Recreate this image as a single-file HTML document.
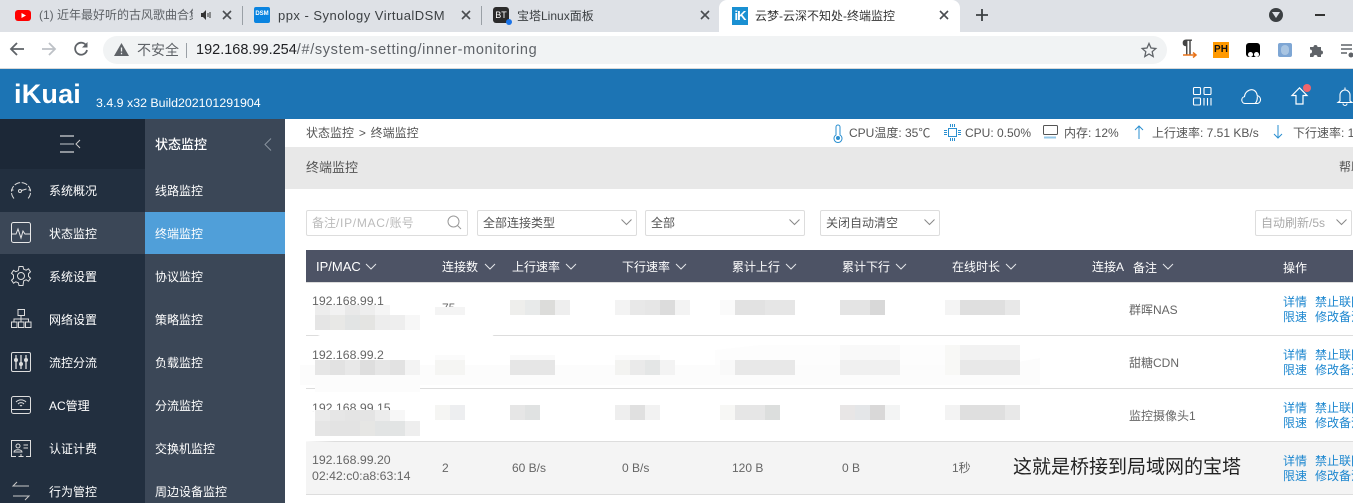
<!DOCTYPE html>
<html lang="zh">
<head>
<meta charset="utf-8">
<title>云梦-云深不知处-终端监控</title>
<style>
html,body{margin:0;padding:0;width:1353px;height:503px;overflow:hidden;background:#fff}
body{position:relative;font-family:"Liberation Sans","Noto Sans CJK SC",sans-serif;font-size:12px;color:#666}
.b{position:absolute}
.t{position:absolute;white-space:nowrap;line-height:16px;height:16px}
.n{color:#fff;font-size:12px}
.h{color:#fff;font-size:12px}
.l{color:#1b86cf;font-size:12px}
.d{color:#666;font-size:12px}
.s{color:#555;font-size:12px}
.tab{color:#3c4043;font-size:12px}
svg{position:absolute;overflow:visible}
.sel{position:absolute;top:210px;height:24px;border:1px solid #ddd;border-radius:2px;background:#fff;box-sizing:content-box}
</style>
</head>
<body>
<!-- Tab strip -->
<div class="b" style="left:0;top:0;width:1353px;height:32px;background:#dee1e6"></div>
<div class="b" style="left:719px;top:0;width:241px;height:32px;background:#fff;border-radius:8px 8px 0 0"></div>
<div class="b" style="left:242px;top:6px;width:1px;height:19px;background:#9aa0a6"></div>
<div class="b" style="left:481px;top:6px;width:1px;height:19px;background:#9aa0a6"></div>

<div class="b" style="left:15px;top:10px;width:16px;height:11px;background:#f00;border-radius:3px"></div>
<svg style="left:15px;top:10px" width="16" height="11"><path d="M6.500 3v5l4.500-2.500z" fill="#fff"/></svg>
<div class="t tab" style="left:39px;top:7px;width:154px;overflow:hidden;color:#5f6368">(1) 近年最好听的古风歌曲合集</div>
<svg style="left:200px;top:9px" width="12" height="12"><path d="M1 4h2l3-3v10l-3-3H1z" fill="#333"/><path d="M8 4v4M10 3v6" stroke="#333"/></svg>
<svg style="left:222px;top:10px" width="10" height="10"><path d="M1 1l8 8M9 1l-8 8" stroke="#4a4d51" stroke-width="1.600"/></svg>

<div class="b" style="left:254px;top:7px;width:16px;height:16px;background:#0a84e0;border-radius:2px"></div>
<div class="t" style="left:254px;top:10px;width:16px;font-size:6px;line-height:9px;height:9px;color:#fff;text-align:center;font-weight:bold">DSM</div>
<div class="t tab" style="left:278px;top:8px;font-size:13px;letter-spacing:.48px">ppx - Synology VirtualDSM</div>
<svg style="left:461px;top:10px" width="10" height="10"><path d="M1 1l8 8M9 1l-8 8" stroke="#4a4d51" stroke-width="1.600"/></svg>

<div class="b" style="left:493px;top:7px;width:16px;height:16px;background:#2b2b2b;border-radius:3px"></div>
<div class="t" style="left:493px;top:10px;width:16px;font-size:9px;line-height:10px;height:10px;color:#fff;text-align:center">BT</div>
<div class="b" style="left:506px;top:19px;width:6px;height:6px;border-radius:3px;background:#1a73e8"></div>
<div class="t tab" style="left:517px;top:8px">宝塔Linux面板</div>
<svg style="left:700px;top:10px" width="10" height="10"><path d="M1 1l8 8M9 1l-8 8" stroke="#4a4d51" stroke-width="1.600"/></svg>

<div class="b" style="left:732px;top:7px;width:16px;height:18px;background:#1a90d2"></div>
<div class="t" style="left:732px;top:8px;width:16px;font-size:13px;color:#fff;text-align:center;font-weight:bold;letter-spacing:-1px">iK</div>
<div class="t tab" style="left:755px;top:8px;font-size:12px;color:#333">云梦-云深不知处-终端监控</div>
<svg style="left:939px;top:10px" width="10" height="10"><path d="M1 1l8 8M9 1l-8 8" stroke="#4a4d51" stroke-width="1.600"/></svg>
<svg style="left:976px;top:9px" width="12" height="12"><path d="M6 0v12M0 6h12" stroke="#3c4043" stroke-width="1.800"/></svg>

<div class="b" style="left:1269px;top:8px;width:14px;height:14px;border-radius:7px;background:#3c4043"></div>
<svg style="left:1272px;top:12px" width="8" height="6"><path d="M0 0h8L4 6z" fill="#dee1e6"/></svg>
<div class="b" style="left:1315px;top:14px;width:10px;height:2px;background:#333"></div>

<!-- Toolbar -->
<div class="b" style="left:0;top:32px;width:1353px;height:36px;background:#fff"></div>
<div class="b" style="left:0;top:68px;width:1353px;height:1px;background:#d8d8d8"></div>
<svg style="left:9px;top:41px" width="16" height="16"><path d="M15 8H2M8 2L2 8l6 6" fill="none" stroke="#5f6368" stroke-width="1.800"/></svg>
<svg style="left:41px;top:41px" width="16" height="16"><path d="M1 8h13M8 2l6 6-6 6" fill="none" stroke="#bdc1c6" stroke-width="1.800"/></svg>
<svg style="left:73px;top:41px" width="16" height="16"><path d="M13.500 5A6 6 0 1 0 14 9" fill="none" stroke="#5f6368" stroke-width="1.800"/><path d="M14.500 1v5.500H9z" fill="#5f6368"/></svg>
<div class="b" style="left:103px;top:36px;width:1064px;height:28px;border-radius:14px;background:#f1f3f4"></div>
<svg style="left:114px;top:43px" width="15" height="13"><path d="M7.500 0L15 13H0z" fill="#5f6368"/><path d="M7.500 4.500v4M7.500 9.800v1.500" stroke="#f1f3f4" stroke-width="1.300"/></svg>
<div class="t" style="left:137px;top:42px;font-size:14px;color:#5f6368">不安全</div>
<div class="b" style="left:186px;top:43px;width:1px;height:15px;background:#9aa0a6"></div>
<div class="t" style="left:196px;top:42px;font-size:14.500px;color:#5f6368"><span style="color:#202124">192.168.99.254</span><span style="letter-spacing:.65px">/#/system-setting/inner-monitoring</span></div>
<svg style="left:1141px;top:42px" width="16" height="16"><path d="M8 1.500l2 4.500 4.800.5-3.600 3.200 1 4.800L8 12l-4.200 2.500 1-4.800L1.200 6.500 6 6z" fill="none" stroke="#5f6368" stroke-width="1.300"/></svg>

<div class="t" style="left:1182px;top:39px;font-size:19px;font-weight:bold;color:#444;line-height:18px;height:18px">¶</div>
<svg style="left:1183px;top:52px" width="14" height="6" fill="none" stroke="#e8731a" stroke-width="1.500"><path d="M0 3h13M10 .5L13 3l-3 2.500"/></svg>
<div class="b" style="left:1213px;top:42px;width:16px;height:16px;background:#f90"></div>
<div class="t" style="left:1213px;top:44px;width:16px;font-size:10px;line-height:12px;height:12px;font-weight:bold;color:#111;text-align:center">PH</div>
<div class="b" style="left:1246px;top:43px;width:14px;height:14px;background:#000;border-radius:3px"></div>
<div class="b" style="left:1248px;top:52px;width:5px;height:5px;background:#fff;border-radius:3px"></div>
<div class="b" style="left:1254px;top:52px;width:5px;height:5px;background:#fff;border-radius:3px"></div>
<div class="b" style="left:1278px;top:43px;width:14px;height:14px;background:#7ea6d4;border-radius:2px"></div>
<div class="b" style="left:1281px;top:45px;width:8px;height:10px;background:#a9c5e2;border-radius:4px"></div>
<svg style="left:1309px;top:43px" width="15" height="15"><path d="M1 4h3.500a2 2 0 0 1 4 0H12v3.500a2 2 0 0 1 0 4V14H8.500a2 2 0 0 0-4 0H1v-3.500a2 2 0 0 0 0-4z" fill="#5f6368"/></svg>
<svg style="left:1341px;top:44px" width="12" height="14"><path d="M0 1h11M0 5h11M0 9h6" stroke="#5f6368" stroke-width="1.500"/><circle cx="10" cy="11" r="2.500" fill="#5f6368"/></svg>

<!-- Blue header -->
<div class="b" style="left:0;top:69px;width:1353px;height:50px;background:#1c74b4"></div>
<div class="t" style="left:14px;top:78px;height:32px;line-height:32px;font-size:27px;font-weight:bold;color:#fff;letter-spacing:.2px">iKuai</div>
<div class="t" style="left:96px;top:95px;font-size:12.400px;color:#fff">3.4.9 x32 Build202101291904</div>
<svg style="left:1193px;top:87px" width="19" height="19" fill="none" stroke="#fff" stroke-width="1.100"><rect x=".5" y=".5" width="7" height="7" rx="1"/><rect x="11" y=".5" width="7" height="7" rx="1"/><rect x=".5" y="11" width="7" height="7" rx="1"/><path d="M11 11v7.500M14.500 11v7.500M18 11v7.500"/></svg>
<svg style="left:1241px;top:89px" width="21" height="15" fill="none" stroke="#fff" stroke-width="1.100"><path d="M4 14.500a3.500 3.500 0 0 1-.5-6.900C4 3 8 .5 11 .7c3 .2 5 3 5.300 6a4 4 0 0 1 .2 7.800zM14 14.500c2-1.500 2.500-5 2.300-7"/></svg>
<svg style="left:1291px;top:87px" width="17" height="18" fill="none" stroke="#fff" stroke-width="1.200"><path d="M8.500 .8L16 8.500h-4V17H5V8.500H1z"/></svg>
<div class="b" style="left:1303px;top:84px;width:8px;height:8px;border-radius:4px;background:#f0656c"></div>
<svg style="left:1337px;top:87px" width="16" height="19" fill="none" stroke="#fff" stroke-width="1.100"><path d="M8 .5v2M3 14V8a5 5 0 0 1 10 0v6l2 1.500H1zM6 16.500a2 2 0 0 0 4 0"/></svg>

<!-- Sidebars -->
<div class="b" style="left:0;top:119px;width:145px;height:384px;background:#222f3f"></div>
<div class="b" style="left:0;top:119px;width:145px;height:50px;background:#1c2837"></div>
<div class="b" style="left:145px;top:119px;width:140px;height:384px;background:#3b4757"></div>
<div class="b" style="left:0;top:212px;width:145px;height:42px;background:#3b4757"></div>
<div class="b" style="left:145px;top:212px;width:140px;height:42px;background:#509fd9"></div>

<svg style="left:60px;top:135px" width="21" height="18" fill="none"><path d="M0 1h14M0 17h14" stroke="#fff" stroke-width="1"/><path d="M0 9h14" stroke="#8b929b" stroke-width="1.500"/><path d="M20 5l-4 4 4 4" stroke="#ccc" stroke-width="1"/></svg>
<div class="t n" style="left:155px;top:137px;font-size:13px;font-weight:500">状态监控</div>
<svg style="left:264px;top:138px" width="8" height="13"><path d="M7 .5L1 6.500l6 6" fill="none" stroke="#8a94a0" stroke-width="1"/></svg>

<svg style="left:10px;top:180px" width="22" height="20" fill="none" stroke="#ddd" stroke-width="1"><path d="M4 18.500A9.500 9.500 0 1 1 18 18.500" stroke-dasharray="6 1.500"/><circle cx="10" cy="11" r="1.500"/><path d="M11.500 10.500l5-1.500M1 10h2.500M18.500 10H21"/></svg>
<svg style="left:11px;top:222px" width="20" height="21" fill="none" stroke="#e8e8e8" stroke-width="1"><rect x=".5" y=".5" width="19" height="20" rx="2"/><path d="M1 12h4l2-5 3 9 2-7 2 3h5"/></svg>
<svg style="left:11px;top:266px" width="20" height="20" fill="none" stroke="#ddd" stroke-width="1"><path d="M8 .5h4l.7 2.700 2.500 1 2.300-1.400 2 3-2 1.800v2.800l2 1.800-2 3-2.300-1.400-2.500 1L12 19.500H8l-.7-2.700-2.500-1-2.300 1.400-2-3 2-1.800V9.100l-2-1.800 2-3 2.300 1.400 2.500-1z"/><circle cx="10" cy="10" r="3.500"/></svg>
<svg style="left:11px;top:309px" width="20" height="19" fill="none" stroke="#ddd" stroke-width="1"><rect x="7" y=".5" width="6.500" height="6"/><rect x=".5" y="13" width="5.500" height="5.500"/><rect x="7.500" y="13" width="5.500" height="5.500"/><rect x="14.500" y="13" width="5.500" height="5.500"/><path d="M10 6.500v3.500M3 13v-3h14.500v3M10 10v3"/></svg>
<svg style="left:11px;top:352px" width="20" height="20" fill="none" stroke="#ddd" stroke-width="1"><rect x=".5" y=".5" width="19" height="19" rx="1.500"/><path d="M5 3v14M10 3v14M15 3v14" stroke-width="1.300"/><circle cx="5" cy="8" r="1.500" fill="#ddd"/><circle cx="10" cy="12" r="1.500" fill="#ddd"/><circle cx="15" cy="8" r="1.500" fill="#ddd"/></svg>
<svg style="left:11px;top:396px" width="20" height="18" fill="none" stroke="#ddd" stroke-width="1"><rect x=".5" y=".5" width="19" height="17" rx="2"/><path d="M.5 13.500h19M5 6a7 7 0 0 1 10 0M7 8a4 4 0 0 1 6 0M9 10a1.500 1.500 0 0 1 2 0"/></svg>
<svg style="left:11px;top:440px" width="20" height="17" fill="none" stroke="#ddd" stroke-width="1"><path d="M5 16.500H.5V.5h19v16H15M7.500 16.500h5M10 14v2"/><circle cx="7" cy="6" r="2"/><path d="M3 12c0-3 8-3 8 0zM12.500 5H17M12.500 8H17"/></svg>
<svg style="left:12px;top:481px" width="18" height="20" fill="none" stroke="#c8c8c8" stroke-width="1"><path d="M17 5H1l4-4M1 15h16l-4 4"/></svg>

<div class="t n" style="left:49px;top:183px">系统概况</div>
<div class="t n" style="left:49px;top:226px">状态监控</div>
<div class="t n" style="left:49px;top:269px">系统设置</div>
<div class="t n" style="left:49px;top:312px">网络设置</div>
<div class="t n" style="left:49px;top:355px">流控分流</div>
<div class="t n" style="left:49px;top:398px">AC管理</div>
<div class="t n" style="left:49px;top:441px">认证计费</div>
<div class="t n" style="left:49px;top:484px">行为管控</div>

<div class="t n" style="left:155px;top:183px">线路监控</div>
<div class="t n" style="left:155px;top:226px">终端监控</div>
<div class="t n" style="left:155px;top:269px">协议监控</div>
<div class="t n" style="left:155px;top:312px">策略监控</div>
<div class="t n" style="left:155px;top:355px">负载监控</div>
<div class="t n" style="left:155px;top:398px">分流监控</div>
<div class="t n" style="left:155px;top:441px">交换机监控</div>
<div class="t n" style="left:155px;top:484px">周边设备监控</div>

<!-- Status bar -->
<div class="t s" style="left:306px;top:125px;word-spacing:1.500px">状态监控 &gt; 终端监控</div>
<svg style="left:832px;top:124px" width="12" height="18" fill="none" stroke="#2a8fd0" stroke-width="1"><path d="M4 11V3a2 2 0 0 1 4 0v8a4 4 0 1 1-4 0z"/><circle cx="6" cy="14" r="1.500" fill="#2a8fd0"/></svg>
<div class="t s" style="left:849px;top:125px">CPU温度: 35℃</div>
<svg style="left:944px;top:124px" width="17" height="17" fill="none" stroke="#2a8fd0" stroke-width="1"><rect x="4.500" y="4.500" width="8" height="8"/><path d="M0 6.500h3M0 8.500h3M0 10.500h3M14 6.500h3M14 8.500h3M14 10.500h3M6.500 0v3M8.500 0v3M10.500 0v3M6.500 14v3M8.500 14v3M10.500 14v3"/></svg>
<div class="t s" style="left:965px;top:125px">CPU: 0.50%</div>
<svg style="left:1043px;top:125px" width="16" height="15" fill="none" stroke="#555" stroke-width="1"><rect x=".5" y=".5" width="14" height="9" rx="1"/><path d="M2 11.500v2M4 11.500v2M6 11.500v2M8 11.500v2M10 11.500v2M12 11.500v2" stroke="#2a8fd0"/></svg>
<div class="t s" style="left:1064px;top:125px">内存: 12%</div>
<svg style="left:1134px;top:125px" width="10" height="14" fill="none" stroke="#2a8fd0" stroke-width="1"><path d="M5 14V1M1 5l4-4 4 4"/></svg>
<div class="t s" style="left:1152px;top:125px">上行速率: 7.51 KB/s</div>
<svg style="left:1273px;top:125px" width="10" height="14" fill="none" stroke="#2a8fd0" stroke-width="1"><path d="M5 0v13M1 9l4 4 4-4"/></svg>
<div class="t s" style="left:1293px;top:125px">下行速率: 1</div>

<!-- Grey title -->
<div class="b" style="left:285px;top:147px;width:1068px;height:42px;background:#e8e8e8"></div>
<div class="t" style="left:306px;top:160px;font-size:13px;color:#555">终端监控</div>
<div class="t" style="left:1339px;top:159px;font-size:12px;color:#555">帮助</div>

<!-- Filters -->
<div class="sel" style="left:306px;width:160px"></div>
<div class="t" style="left:312px;top:215px;color:#bbb">备注<span style="letter-spacing:.7px">/IP/MAC/</span>账号</div>
<svg style="left:447px;top:215px" width="15" height="15" fill="none" stroke="#999" stroke-width="1"><circle cx="6.500" cy="6.500" r="5.500"/><path d="M10.500 10.500l3.500 3.500"/></svg>
<div class="sel" style="left:477px;width:158px"></div>
<div class="t" style="left:483px;top:215px;color:#555">全部连接类型</div>
<svg style="left:621px;top:219px" width="11" height="6" fill="none" stroke="#888"><path d="M.5 .5l5 5 5-5"/></svg>
<div class="sel" style="left:645px;width:158px"></div>
<div class="t" style="left:651px;top:215px;color:#555">全部</div>
<svg style="left:789px;top:219px" width="11" height="6" fill="none" stroke="#888"><path d="M.5 .5l5 5 5-5"/></svg>
<div class="sel" style="left:820px;width:118px"></div>
<div class="t" style="left:826px;top:215px;color:#555">关闭自动清空</div>
<svg style="left:924px;top:219px" width="11" height="6" fill="none" stroke="#888"><path d="M.5 .5l5 5 5-5"/></svg>
<div class="sel" style="left:1255px;width:95px"></div>
<div class="t" style="left:1261px;top:215px;color:#aaa">自动刷新/5s</div>
<svg style="left:1336px;top:219px" width="11" height="6" fill="none" stroke="#888"><path d="M.5 .5l5 5 5-5"/></svg>

<!-- Table header -->
<div class="b" style="left:306px;top:250px;width:1047px;height:32px;background:#4d5365"></div>
<div class="b" style="left:306px;top:282px;width:1047px;height:1px;background:#dcdcdc"></div>
<div class="t h" style="left:316px;top:259px;font-size:13px">IP/MAC</div>
<div class="t h" style="left:442px;top:259px">连接数</div>
<div class="t h" style="left:512px;top:259px">上行速率</div>
<div class="t h" style="left:622px;top:259px">下行速率</div>
<div class="t h" style="left:732px;top:259px">累计上行</div>
<div class="t h" style="left:842px;top:259px">累计下行</div>
<div class="t h" style="left:952px;top:259px">在线时长</div>
<div class="t h" style="left:1092px;top:259px">连接A</div>
<div class="t h" style="left:1133px;top:260px">备注</div>
<div class="t h" style="left:1283px;top:260px">操作</div>
<svg style="left:0;top:0" width="1353" height="503" fill="none" stroke="#e4e6ea" stroke-width="1"><path d="M366 264l5 5 5-5M485 264l5 5 5-5M566 264l5 5 5-5M676 264l5 5 5-5M786 264l5 5 5-5M896 264l5 5 5-5M1006 264l5 5 5-5M1163 264l5 5 5-5"/></svg>

<!-- Rows -->
<div class="b" style="left:306px;top:442px;width:1047px;height:52px;background:#f4f4f4"></div>
<div class="b" style="left:306px;top:335px;width:1047px;height:1px;background:#ddd"></div>
<div class="b" style="left:306px;top:388px;width:1047px;height:1px;background:#ddd"></div>
<div class="b" style="left:306px;top:441px;width:1047px;height:1px;background:#ddd"></div>
<div class="b" style="left:306px;top:494px;width:1047px;height:1px;background:#ddd"></div>

<div class="t d" style="left:312px;top:293px;font-size:12.300px">192.168.99.1</div>
<div class="t d" style="left:312px;top:347px;font-size:12.300px">192.168.99.2</div>
<div class="t d" style="left:312px;top:400px;font-size:12.300px">192.168.99.15</div>
<div class="t d" style="left:442px;top:300px">75</div>

<!-- Mosaic blur -->
<svg style="left:0;top:0" width="1353" height="503">
<g fill="#fdfdfd">
<path d="M303 315L315 305H410L430 315V330H500L490 338L400 342L330 340L305 330Z" fill="#fff"/>
<path d="M300 365H1000L1040 358V385H420V392H315V385H300Z" fill="#fcfcfc"/>
<path d="M715 350L760 345H1020V365H715Z" fill="#fdfdfd"/>
<path d="M300 420L315 410H420V432L440 438L300 442Z" fill="#fff"/>
</g>
<g>
<rect x="315" y="305" width="15" height="10" fill="#ededed"/><rect x="330" y="305" width="15" height="10" fill="#f2f2f2"/><rect x="345" y="305" width="15" height="10" fill="#e9e9e9"/><rect x="360" y="305" width="15" height="10" fill="#eeeeee"/><rect x="375" y="305" width="15" height="10" fill="#f5f5f5"/>
<rect x="315" y="315" width="15" height="15" fill="#e5e5e5"/><rect x="330" y="315" width="15" height="15" fill="#e8e8e6"/><rect x="345" y="315" width="15" height="15" fill="#e2e4e4"/><rect x="360" y="315" width="15" height="15" fill="#e4e4e2"/><rect x="375" y="315" width="15" height="15" fill="#ededed"/><rect x="390" y="315" width="15" height="15" fill="#eeeeee"/><rect x="405" y="315" width="15" height="15" fill="#f7f7f7"/>
<rect x="435" y="307" width="30" height="8" fill="#f4f4f4"/>
<rect x="510" y="300" width="15" height="15" fill="#eeeeec"/><rect x="525" y="300" width="15" height="15" fill="#e8eaea"/><rect x="540" y="300" width="15" height="15" fill="#dcdcda"/><rect x="555" y="300" width="15" height="15" fill="#eeeeee"/>
<rect x="615" y="300" width="15" height="15" fill="#f3f3f3"/><rect x="630" y="300" width="15" height="15" fill="#e8e8e8"/><rect x="645" y="300" width="15" height="15" fill="#e6e6e6"/><rect x="660" y="300" width="15" height="15" fill="#dcdcdc"/><rect x="675" y="300" width="15" height="15" fill="#f3f3f3"/>
<rect x="720" y="300" width="15" height="15" fill="#fafafa"/><rect x="735" y="300" width="30" height="15" fill="#e2e2e2"/><rect x="765" y="300" width="30" height="15" fill="#e6e6e6"/>
<rect x="840" y="300" width="30" height="15" fill="#e4e4e4"/><rect x="870" y="300" width="15" height="15" fill="#d8d8d8"/>
<rect x="945" y="300" width="15" height="15" fill="#f4f4f4"/><rect x="960" y="300" width="45" height="15" fill="#dfdfdf"/><rect x="1005" y="300" width="15" height="15" fill="#e8e8e8"/>

<rect x="315" y="360" width="15" height="15" fill="#e6e6e6"/><rect x="330" y="360" width="15" height="15" fill="#e2e2e2"/><rect x="345" y="360" width="15" height="15" fill="#e8e8e8"/><rect x="360" y="360" width="15" height="15" fill="#dedede"/><rect x="375" y="360" width="15" height="15" fill="#e6e6e6"/><rect x="390" y="360" width="15" height="15" fill="#e2e2e2"/><rect x="405" y="360" width="15" height="15" fill="#f3f3f3"/>
<rect x="435" y="355" width="30" height="5" fill="#fbfbfb"/><rect x="435" y="360" width="30" height="15" fill="#f5f5f3"/>
<rect x="510" y="355" width="45" height="5" fill="#fafafa"/><rect x="510" y="360" width="45" height="15" fill="#e6e6e6"/>
<rect x="615" y="355" width="45" height="5" fill="#fbfbfb"/><rect x="615" y="360" width="15" height="15" fill="#f3f3f1"/><rect x="630" y="360" width="15" height="15" fill="#eaeaea"/><rect x="645" y="360" width="15" height="15" fill="#e4e6e6"/><rect x="660" y="360" width="15" height="15" fill="#f3f3f3"/>
<rect x="720" y="360" width="15" height="15" fill="#f9f9f9"/><rect x="735" y="360" width="60" height="15" fill="#e8e8e8"/>
<rect x="840" y="345" width="60" height="15" fill="#f9f9f9"/><rect x="840" y="360" width="60" height="15" fill="#f0f0f0"/>
<rect x="945" y="345" width="15" height="30" fill="#f8f8f6"/><rect x="960" y="345" width="60" height="15" fill="#f2f2f2"/><rect x="960" y="360" width="60" height="15" fill="#e8e8e8"/>

<rect x="315" y="410" width="15" height="11" fill="#eaeaea"/><rect x="330" y="410" width="15" height="11" fill="#e6e6e6"/><rect x="345" y="410" width="30" height="11" fill="#e4e4e4"/><rect x="375" y="410" width="15" height="11" fill="#ececec"/><rect x="390" y="410" width="15" height="11" fill="#f7f7f7"/>
<rect x="315" y="421" width="15" height="15" fill="#e5e5e5"/><rect x="330" y="421" width="30" height="15" fill="#e3e3e3"/><rect x="360" y="421" width="15" height="15" fill="#e6e6e4"/><rect x="375" y="421" width="30" height="15" fill="#e2e4e4"/><rect x="405" y="421" width="15" height="15" fill="#eeeeee"/>
<rect x="435" y="405" width="15" height="15" fill="#f5f5f3"/><rect x="450" y="405" width="15" height="15" fill="#edeef0"/>
<rect x="510" y="405" width="15" height="15" fill="#e6e6e6"/><rect x="525" y="405" width="15" height="15" fill="#e0e2e2"/>
<rect x="615" y="405" width="15" height="15" fill="#eeeeee"/><rect x="630" y="405" width="15" height="15" fill="#e0e0e0"/><rect x="645" y="405" width="15" height="15" fill="#f2f2f2"/>
<rect x="720" y="405" width="15" height="15" fill="#f7f7f5"/><rect x="735" y="405" width="30" height="15" fill="#e6e6e6"/><rect x="765" y="405" width="15" height="15" fill="#dcdedd"/>
<rect x="840" y="405" width="15" height="15" fill="#e8e6e6"/><rect x="855" y="405" width="15" height="15" fill="#e4e6e8"/><rect x="870" y="405" width="15" height="15" fill="#d9d8d8"/><rect x="885" y="405" width="15" height="15" fill="#f3f4f4"/>
<rect x="945" y="405" width="15" height="15" fill="#f3f3f3"/><rect x="960" y="405" width="45" height="15" fill="#dfdfdf"/><rect x="1005" y="405" width="15" height="15" fill="#e8e8e8"/>
</g>
</svg>

<div class="t d" style="left:1129px;top:302px">群晖NAS</div>
<div class="t d" style="left:1129px;top:355px">甜糖CDN</div>
<div class="t d" style="left:1129px;top:408px">监控摄像头1</div>

<div class="t d" style="left:312px;top:452px;font-size:12.300px">192.168.99.20</div>
<div class="t d" style="left:312px;top:468px;font-size:12.300px">02:42:c0:a8:63:14</div>
<div class="t d" style="left:442px;top:460px">2</div>
<div class="t d" style="left:512px;top:460px">60 B/s</div>
<div class="t d" style="left:622px;top:460px">0 B/s</div>
<div class="t d" style="left:732px;top:460px">120 B</div>
<div class="t d" style="left:842px;top:460px">0 B</div>
<div class="t d" style="left:952px;top:460px">1秒</div>
<div class="t" style="left:1013px;top:457px;font-size:19px;line-height:22px;height:22px;color:#222">这就是桥接到局域网的宝塔</div>

<div class="t l" style="left:1283px;top:294px">详情</div><div class="t l" style="left:1315px;top:294px">禁止联网</div>
<div class="t l" style="left:1283px;top:309px">限速</div><div class="t l" style="left:1315px;top:309px">修改备注</div>
<div class="t l" style="left:1283px;top:347px">详情</div><div class="t l" style="left:1315px;top:347px">禁止联网</div>
<div class="t l" style="left:1283px;top:362px">限速</div><div class="t l" style="left:1315px;top:362px">修改备注</div>
<div class="t l" style="left:1283px;top:400px">详情</div><div class="t l" style="left:1315px;top:400px">禁止联网</div>
<div class="t l" style="left:1283px;top:415px">限速</div><div class="t l" style="left:1315px;top:415px">修改备注</div>
<div class="t l" style="left:1283px;top:453px">详情</div><div class="t l" style="left:1315px;top:453px">禁止联网</div>
<div class="t l" style="left:1283px;top:468px">限速</div><div class="t l" style="left:1315px;top:468px">修改备注</div>
</body>
</html>
